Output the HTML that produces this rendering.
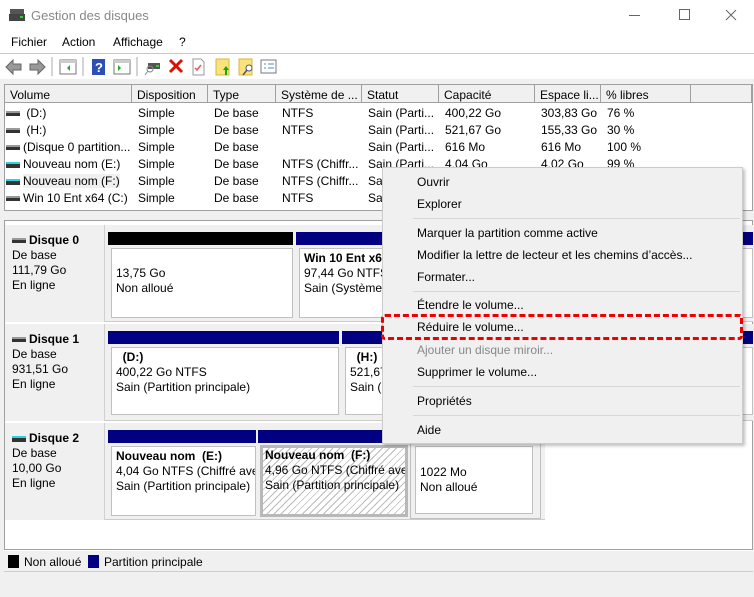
<!DOCTYPE html>
<html><head><meta charset="utf-8"><style>
*{margin:0;padding:0;box-sizing:border-box}
body{width:754px;height:597px;position:relative;background:#f0f0f0;font-family:"Liberation Sans",sans-serif;font-size:12px;color:#000;overflow:hidden}
.a{position:absolute;white-space:nowrap}
.hd{position:absolute;top:85px;height:18px;background:#f0f0f0;border-right:1px solid #a0a0a0;border-bottom:1px solid #a0a0a0;padding:3px 0 0 5px}
.bar{position:absolute;height:13px}
.box{position:absolute;background:#fff;border:1px solid #c0c0c0;padding:2px 4px;line-height:15px;white-space:nowrap;overflow:hidden}
.lab{position:absolute;left:5px;width:100px;background:#f0f0f0;border-right:1px solid #d0d0d0;padding:8px 0 0 7px;line-height:15px;white-space:nowrap}
.mi{position:absolute;left:417px}
.sep{position:absolute;left:413px;width:327px;height:1px;background:#d7d7d7}
.di{display:inline-block;width:14px;height:5px;background:#333;border-top:2px solid #9a9a9a;vertical-align:middle;margin-right:3px;position:relative}
.di.c{border-top-color:#2dd4e0;height:6px}
</style></head><body>
<div class="a" style="left:0;top:0;width:754px;height:79px;background:#fff"></div>
<svg class="a" style="left:9px;top:8px" width="16" height="14"><rect x="1" y="1" width="14" height="5" fill="#555"/><rect x="0" y="6" width="16" height="7" fill="#444"/><rect x="11" y="8" width="3" height="2" fill="#3c3"/></svg>
<div class="a" style="left:31px;top:8px;color:#888;font-size:13px">Gestion des disques</div>
<div class="a" style="left:629px;top:15px;width:11px;height:1px;background:#666"></div>
<div class="a" style="left:679px;top:9px;width:11px;height:11px;border:1px solid #666"></div>
<svg class="a" style="left:725px;top:9px" width="12" height="12"><path d="M1 1L11 11M11 1L1 11" stroke="#666" stroke-width="1"/></svg>
<div class="a" style="left:11px;top:35px">Fichier</div>
<div class="a" style="left:62px;top:35px">Action</div>
<div class="a" style="left:113px;top:35px">Affichage</div>
<div class="a" style="left:179px;top:35px">?</div>
<div class="a" style="left:0;top:53px;width:754px;height:1px;background:#c8c8c8"></div>
<svg class="a" style="left:0;top:54px" width="290" height="25">
<path d="M6 13l7-7v4h8v6h-8v4z" fill="#999" stroke="#666"/>
<path d="M45 13l-7-7v4h-8v6h8v4z" fill="#999" stroke="#666"/>
<line x1="52" y1="3" x2="52" y2="22" stroke="#aaa"/>
<rect x="60" y="6" width="16" height="14" fill="#fff" stroke="#777"/><rect x="60" y="6" width="16" height="3" fill="#ccc"/><path d="M70 11l-3 3 3 3z" fill="#2a2"/>
<line x1="83" y1="3" x2="83" y2="22" stroke="#aaa"/>
<rect x="92" y="5" width="13" height="16" fill="#2d4fb5"/><text x="95" y="18" fill="#fff" font-size="13" font-weight="bold" font-family="Liberation Sans">?</text>
<rect x="114" y="6" width="16" height="14" fill="#fff" stroke="#777"/><rect x="114" y="6" width="16" height="3" fill="#ccc"/><path d="M118 11l3 3-3 3z" fill="#2a2"/>
<line x1="137" y1="3" x2="137" y2="22" stroke="#aaa"/>
<rect x="148" y="9" width="12" height="6" fill="#555"/><circle cx="150" cy="15" r="3" fill="none" stroke="#888"/><line x1="148" y1="17" x2="145" y2="21" stroke="#888"/><rect x="156" y="11" width="3" height="2" fill="#3c3"/>
<path d="M170 6l12 12M182 6l-12 12" stroke="#d10" stroke-width="3"/>
<path d="M193 5h8l3 3v13h-11z" fill="#fff" stroke="#999"/><path d="M195 14l2 2 4-5" stroke="#e55" fill="none" stroke-width="1.5"/>
<rect x="216" y="5" width="13" height="16" fill="#fbe27a" stroke="#d9b53c"/><path d="M226 12l-3 4h2v5h2v-5h2z" fill="#1a1"/>
<rect x="239" y="5" width="13" height="16" fill="#fbe27a" stroke="#d9b53c"/><circle cx="249" cy="14" r="3" fill="#fff" stroke="#557"/><line x1="247" y1="16" x2="243" y2="21" stroke="#557" stroke-width="1.5"/>
<rect x="261" y="6" width="15" height="13" fill="#fff" stroke="#778"/><path d="M264 10h2M264 14h2M268 10h6M268 14h6" stroke="#58b"/>
</svg>
<div class="a" style="left:4px;top:84px;width:749px;height:127px;background:#fff;border:1px solid #a0a0a0"></div>
<div class="hd" style="left:5px;width:127px">Volume</div>
<div class="hd" style="left:132px;width:76px">Disposition</div>
<div class="hd" style="left:208px;width:68px">Type</div>
<div class="hd" style="left:276px;width:86px">Système de ...</div>
<div class="hd" style="left:362px;width:77px">Statut</div>
<div class="hd" style="left:439px;width:96px">Capacité</div>
<div class="hd" style="left:535px;width:66px">Espace li...</div>
<div class="hd" style="left:601px;width:90px">% libres</div>
<div class="hd" style="left:691px;width:61px"></div>
<div class="a" style="left:6px;top:105px;line-height:17px">
<div><span class="di"></span> (D:)</div><div><span class="di"></span> (H:)</div><div><span class="di"></span>(Disque 0 partition...</div><div><span class="di c"></span>Nouveau nom (E:)</div><div><span class="di c"></span><span style="background:#f0f0f0">Nouveau nom (F:)</span></div><div><span class="di"></span>Win 10 Ent x64 (C:)</div></div>
<div class="a" style="left:138px;top:105px;line-height:17px">Simple<br>Simple<br>Simple<br>Simple<br>Simple<br>Simple</div>
<div class="a" style="left:214px;top:105px;line-height:17px">De base<br>De base<br>De base<br>De base<br>De base<br>De base</div>
<div class="a" style="left:282px;top:105px;line-height:17px">NTFS<br>NTFS<br>&nbsp;<br>NTFS (Chiffr...<br>NTFS (Chiffr...<br>NTFS</div>
<div class="a" style="left:368px;top:105px;line-height:17px">Sain (Parti...<br>Sain (Parti...<br>Sain (Parti...<br>Sain (Parti...<br>Sain<br>Sain</div>
<div class="a" style="left:445px;top:105px;line-height:17px">400,22 Go<br>521,67 Go<br>616 Mo<br>4,04 Go</div>
<div class="a" style="left:541px;top:105px;line-height:17px">303,83 Go<br>155,33 Go<br>616 Mo<br>4,02 Go</div>
<div class="a" style="left:607px;top:105px;line-height:17px">76 %<br>30 %<br>100 %<br>99 %</div>
<div class="a" style="left:4px;top:220px;width:749px;height:330px;background:#fff;border:1px solid #a0a0a0"></div>
<div class="lab" style="top:225px;height:97px"><b><span class="di"></span>Disque 0</b><br>De base<br>111,79 Go<br>En ligne</div>
<div class="lab" style="top:324px;height:97px"><b><span class="di"></span>Disque 1</b><br>De base<br>931,51 Go<br>En ligne</div>
<div class="lab" style="top:423px;height:97px"><b><span class="di c"></span>Disque 2</b><br>De base<br>10,00 Go<br>En ligne</div>
<div class="a" style="left:105px;top:225px;width:648px;height:97px;background:#f0f0f0;border-bottom:1px solid #ccc"></div>
<div class="a" style="left:105px;top:324px;width:648px;height:97px;background:#f0f0f0;border-bottom:1px solid #ccc"></div>
<div class="a" style="left:105px;top:423px;width:440px;height:97px;background:#f0f0f0;border-bottom:1px solid #ccc"></div>
<div class="bar" style="left:108px;top:232px;width:185px;background:#000"></div>
<div class="box" style="left:111px;top:248px;width:182px;height:70px;padding-top:17px">13,75 Go<br>Non alloué</div>
<div class="bar" style="left:296px;top:232px;width:457px;background:#000080"></div>
<div class="box" style="left:299px;top:248px;width:454px;height:70px"><b>Win 10 Ent x64</b><br>97,44 Go NTFS<br>Sain (Système,</div>
<div class="bar" style="left:108px;top:331px;width:231px;background:#000080"></div>
<div class="box" style="left:111px;top:347px;width:228px;height:68px"><b>&nbsp;&nbsp;(D:)</b><br>400,22 Go NTFS<br>Sain (Partition principale)</div>
<div class="bar" style="left:342px;top:331px;width:411px;background:#000080"></div>
<div class="box" style="left:345px;top:347px;width:408px;height:68px"><b>&nbsp;&nbsp;(H:)</b><br>521,67<br>Sain (P</div>
<div class="bar" style="left:108px;top:430px;width:148px;background:#000080"></div>
<div class="box" style="left:111px;top:446px;width:145px;height:70px"><b>Nouveau nom &nbsp;(E:)</b><br>4,04 Go NTFS (Chiffré ave<br>Sain (Partition principale)</div>
<div class="bar" style="left:258px;top:430px;width:150px;background:#000080"></div>
<div class="box" style="left:260px;top:445px;width:148px;height:72px;border:3px solid #b8b8b8;padding:0 2px;background:repeating-linear-gradient(135deg,#fff 0 4px,#bbb 4px 5px)"><b>Nouveau nom &nbsp;(F:)</b><br>4,96 Go NTFS (Chiffré avec<br>Sain (Partition principale)</div>
<div class="a" style="left:410px;top:443px;width:131px;height:76px;border:1px solid #c0c0c0"></div>
<div class="box" style="left:415px;top:446px;width:118px;height:68px;padding-top:18px">1022 Mo<br>Non alloué</div>
<div class="a" style="left:4px;top:550px;width:749px;height:22px;background:#f0f0f0;border-top:1px solid #fff;border-bottom:1px solid #ccc"></div>
<div class="a" style="left:8px;top:555px;width:11px;height:13px;background:#000"></div>
<div class="a" style="left:24px;top:555px">Non alloué</div>
<div class="a" style="left:88px;top:555px;width:11px;height:13px;background:#000080"></div>
<div class="a" style="left:104px;top:555px">Partition principale</div>
<div class="a" style="left:382px;top:167px;width:361px;height:277px;background:#f0f0f0;border:1px solid #ccc;box-shadow:2px 2px 3px rgba(0,0,0,.25)"></div>
<div class="mi" style="top:175px">Ouvrir</div>
<div class="mi" style="top:197px">Explorer</div>
<div class="sep" style="top:218px"></div>
<div class="mi" style="top:226px">Marquer la partition comme active</div>
<div class="mi" style="top:248px">Modifier la lettre de lecteur et les chemins d’accès...</div>
<div class="mi" style="top:270px">Formater...</div>
<div class="sep" style="top:291px"></div>
<div class="mi" style="top:298px">Étendre le volume...</div>
<div class="mi" style="top:320px">Réduire le volume...</div>
<div class="mi" style="top:343px;color:#888">Ajouter un disque miroir...</div>
<div class="mi" style="top:365px">Supprimer le volume...</div>
<div class="sep" style="top:386px"></div>
<div class="mi" style="top:394px">Propriétés</div>
<div class="sep" style="top:415px"></div>
<div class="mi" style="top:423px">Aide</div>
<div class="a" style="left:381px;top:314px;width:362px;height:26px;border:3px dashed #e00;border-radius:4px"></div>
</body></html>
